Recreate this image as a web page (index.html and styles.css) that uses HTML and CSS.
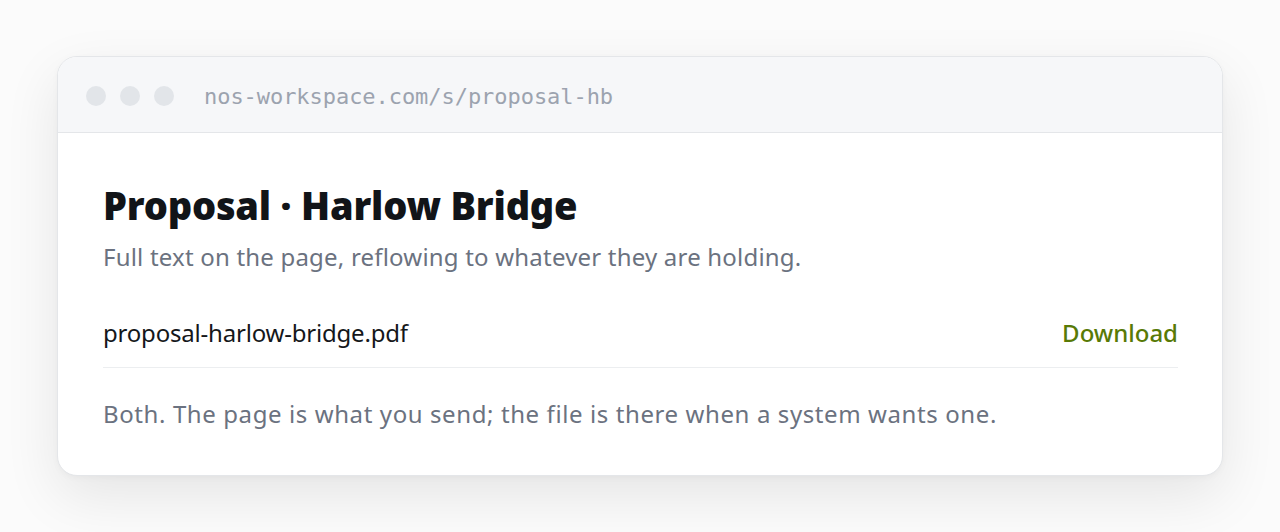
FILE: index.html
```html
<!DOCTYPE html>
<html lang="en">
<head>
<meta charset="utf-8">
<title>Proposal · Harlow Bridge</title>
<link rel="stylesheet" href="styles.css">
</head>
<body>
<div class="window">
  <div class="bar">
    <div class="dots"><span class="dot"></span><span class="dot"></span><span class="dot"></span></div>
    <div class="url">nos-workspace.com/s/proposal-hb</div>
  </div>
  <div class="content">
    <h1 class="title">Proposal · Harlow Bridge</h1>
    <p class="sub">Full text on the page, reflowing to whatever they are holding.</p>
    <div class="file">
      <span class="fname">proposal-harlow-bridge.pdf</span>
      <a class="dl" href="#">Download</a>
    </div>
    <p class="note">Both. The page is what you send; the file is there when a system wants one.</p>
  </div>
</div>
</body>
</html>
```

FILE: styles.css
```css
html, body {
  margin: 0;
  padding: 0;
  background: #fbfbfb;
}
body {
  font-family: "Noto Sans", "Open Sans", sans-serif;
  padding: 56px 57px;
  height: 532px;
  box-sizing: border-box;
  overflow: hidden;
}
.window {
  background: #ffffff;
  border: 1px solid #e4e6e9;
  border-radius: 20px;
  overflow: hidden;
  box-shadow: 0 20px 56px rgba(0, 0, 0, 0.09), 0 2px 6px rgba(0, 0, 0, 0.03);
}
.bar {
  height: 76px;
  box-sizing: border-box;
  padding: 3px 28px 0;
  background: #f6f7f9;
  border-bottom: 1px solid #e4e6e9;
  display: flex;
  align-items: center;
  gap: 30px;
}
.dots {
  display: flex;
  gap: 14px;
}
.dot {
  width: 20px;
  height: 20px;
  border-radius: 50%;
  background: #e2e5e9;
}
.url {
  font-family: "DejaVu Sans Mono", "Liberation Mono", monospace;
  font-size: 22px;
  color: #9ca3af;
  letter-spacing: -0.05px;
}
.content {
  padding: 50px 44px 45px 45px;
}
.title {
  margin: 0;
  font-size: 38px;
  line-height: 44px;
  font-weight: 900;
  color: #111418;
  letter-spacing: -0.2px;
}
.sub {
  margin: 14px 0 0;
  font-size: 24px;
  line-height: 32px;
  color: #6b7280;
  letter-spacing: 0.2px;
}
.file {
  margin-top: 26px;
  padding: 18px 0 18px;
  border-bottom: 1px solid #eceef0;
  display: flex;
  justify-content: space-between;
  align-items: center;
  font-size: 24px;
  line-height: 32px;
}
.fname {
  color: #15171a;
  letter-spacing: -0.2px;
}
.dl {
  color: #587a06;
  text-decoration: none;
  font-weight: 500;
}
.note {
  margin: 30px 0 0;
  font-size: 24px;
  line-height: 32px;
  color: #6b7280;
  letter-spacing: 0.6px;
}
```
